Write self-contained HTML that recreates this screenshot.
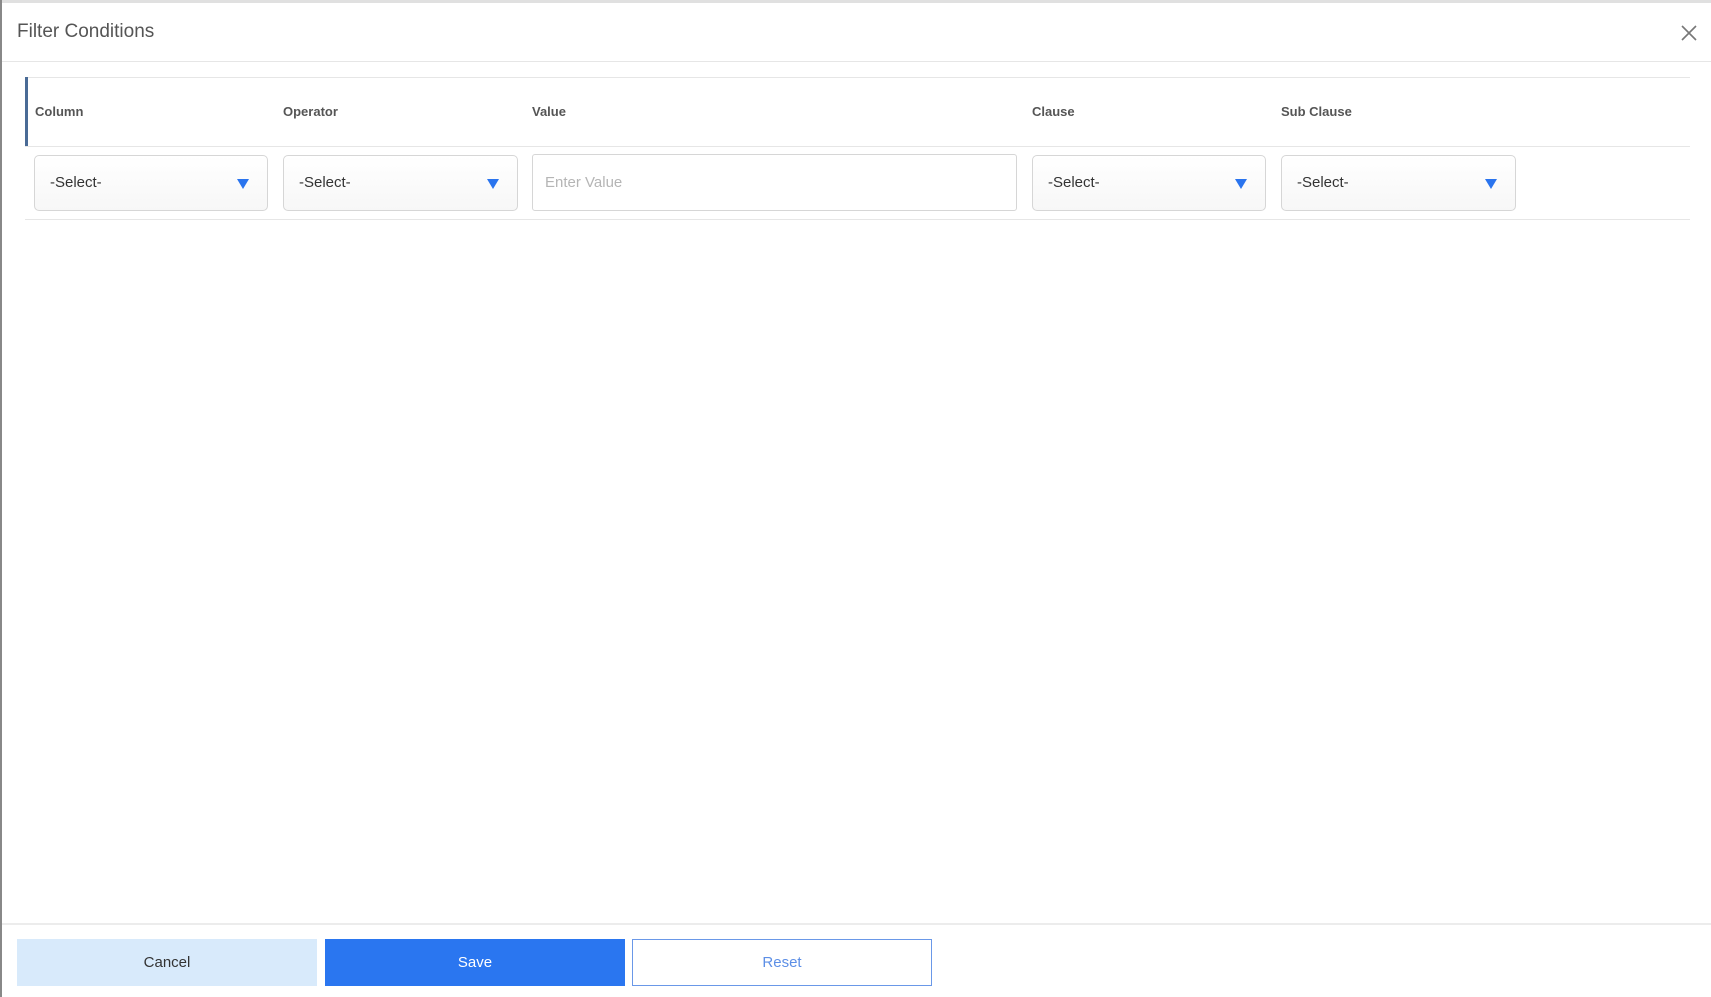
<!DOCTYPE html>
<html><head><meta charset="utf-8"><style>
*{box-sizing:border-box;margin:0;padding:0}
body{width:1711px;height:997px;background:#fff;font-family:"Liberation Sans",Arial,sans-serif;position:relative;overflow:hidden}
.abs{position:absolute}
.hl{position:absolute;height:1px;background:#e6e6e6}
.lbl{position:absolute;top:104px;font-size:13px;font-weight:bold;color:#555}
.sel{position:absolute;top:155px;height:56px;border:1px solid #d6d6d6;border-radius:5px;background:linear-gradient(#fff,#f7f7f7)}
.sel span{position:absolute;left:15px;top:18px;font-size:15px;color:#333}
.sel i{position:absolute;right:18px;top:23px;width:0;height:0;border-left:6px solid transparent;border-right:6px solid transparent;border-top:10px solid #2a74ee}
.btn{position:absolute;top:939px;height:47px;width:300px;font-size:15px;text-align:center;line-height:47px}
</style></head><body>
<div class="abs" style="left:0;top:0;width:1711px;height:3px;background:#e0e0e0"></div>
<div class="abs" style="left:0;top:0;width:2px;height:997px;background:#888"></div>
<div class="abs" style="left:17px;top:21px;font-size:19px;color:#555">Filter Conditions</div>
<svg class="abs" style="left:1681px;top:25px" width="16" height="16" viewBox="0 0 16 16"><path d="M1 1L15 15M15 1L1 15" stroke="#777" stroke-width="1.6"/></svg>
<div class="hl" style="left:2px;top:61px;width:1709px"></div>
<div class="hl" style="left:25px;top:77px;width:1665px"></div>
<div class="abs" style="left:25px;top:77px;width:3px;height:69px;background:#4a6b96"></div>
<div class="lbl" style="left:35px">Column</div>
<div class="lbl" style="left:283px">Operator</div>
<div class="lbl" style="left:532px">Value</div>
<div class="lbl" style="left:1032px">Clause</div>
<div class="lbl" style="left:1281px">Sub Clause</div>
<div class="hl" style="left:25px;top:146px;width:1665px"></div>
<div class="sel" style="left:34px;width:234px"><span>-Select-</span><i></i></div>
<div class="sel" style="left:283px;width:235px"><span>-Select-</span><i></i></div>
<div class="abs" style="left:532px;top:154px;width:485px;height:57px;border:1px solid #d6d6d6;border-radius:3px"><span style="position:absolute;left:12px;top:19px;font-size:15px;color:#b5b5b5">Enter Value</span></div>
<div class="sel" style="left:1032px;width:234px"><span>-Select-</span><i></i></div>
<div class="sel" style="left:1281px;width:235px"><span>-Select-</span><i></i></div>
<div class="hl" style="left:25px;top:219px;width:1665px"></div>
<div class="hl" style="left:2px;top:923px;width:1709px;height:2px;background:#ececec"></div>
<div class="btn" style="left:17px;background:#d8eafb;color:#333">Cancel</div>
<div class="btn" style="left:325px;background:#2a76f0;color:#fff">Save</div>
<div class="btn" style="left:632px;border:1px solid #6a98e8;color:#5d8fe6;line-height:45px">Reset</div>
</body></html>
